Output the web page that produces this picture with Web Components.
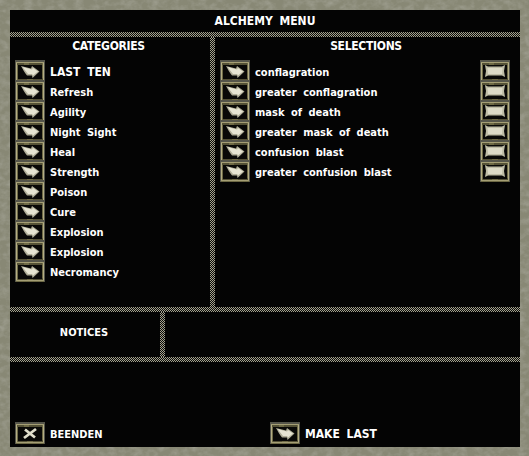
<!DOCTYPE html>
<html>
<head>
<meta charset="utf-8">
<title>Alchemy Menu</title>
<style>
html, body { margin: 0; padding: 0; background: #000; }
</style>
</head>
<body>
<script>
const checker = 'background:repeating-conic-gradient(#a3a18c 0 25%, #0a0a0a 0 50%) 0 0/2px 2px;'

class AmButton extends HTMLElement {
  connectedCallback() {
    const kind = this.getAttribute('icon') || 'arrow'
    const root = this.attachShadow({mode: 'open'})
    root.innerHTML = `<style>
      :host { display: block; width: 30px; height: 22px; flex: none; }
      svg { display: block; width: 30px; height: 22px; }
      .face { filter: blur(.35px); }
    </style>
    ${this.svg(kind)}`
  }
  svg(kind) {
    // arrow is the default face, the others swap it out
    let inner = '<path d="M6 6 L16 8.500 L17 6 L24.500 11.500 L17.500 18 L17 15.500 L12 15.500 C9.500 12.500 8 9.500 6 6Z" fill="#b0ae98"/><path d="M7.500 7 L17 9.500 L18 8 L23 11.500 L18 15.500 L17 14 L13 14Z" fill="#e6e4d2"/>'
    if (kind == 'blank') inner = '<path d="M5 5 L8 6.500 L22 6.500 L25 5 L24 11 L25 17 L22 15.500 L8 15.500 L5 17 L6 11Z" fill="#bfbda6"/><path d="M7.500 8 L22.500 8 L22 14 L8 14Z" fill="#dcdac6"/>'
    if (kind == 'cross') inner = '<path d="M10 7.500 L20 15.500 M21 7 L9 16" stroke="#e2e0cc" stroke-width="2.800" fill="none"/>'
    return `<svg viewBox="0 0 30 22">
      <rect width="30" height="22" fill="#55554a"/>
      <rect x="1" y="2" width="28" height="20" fill="#6e6a46"/>
      <path d="M1 2H29V3H1ZM1 20H29V21H1Z" fill="#a49e74"/>
      <path d="M1.500 3V20M28.500 3V20" stroke="#b4ae84" stroke-width="1"/>
      <path d="M2 4H9M14 4H27M3 19H12M18 19H28" stroke="#3a3826" stroke-width="1"/>
      <rect x="3" y="5" width="24" height="14" fill="#090907"/>
      <g class="face">${inner}</g>
    </svg>`
  }
}
customElements.define('am-button', AmButton)

class AmRow extends HTMLElement {
  connectedCallback() {
    const root = this.attachShadow({mode: 'open'})
    const end = this.getAttribute('end')
    root.innerHTML = `<style>
      :host { display: flex; align-items: flex-start; height: 20px; gap: 5px; font-size: 11px; }
      :host([caps]) { font-size: 12px; }
      .label { flex: 1; white-space: nowrap; line-height: 25px; }
    </style>
    <am-button icon="${this.getAttribute('icon') || 'arrow'}"></am-button>
    <span class="label"><slot></slot></span>
    ${end ? `<am-button icon="${end}"></am-button>` : ''}`
  }
}
customElements.define('am-row', AmRow)

class AmPanel extends HTMLElement {
  connectedCallback() {
    const root = this.attachShadow({mode: 'open'})
    root.innerHTML = `<style>
      :host { display: block; min-width: 0; }
      h2 { margin: 0; height: 23px; padding-right: 3px; font: inherit; letter-spacing: -.3px; text-align: center; line-height: 19px; }
      .rows { padding: 0 10px 0 5px; }
    </style>
    <h2>${this.getAttribute('heading')}</h2>
    <div class="rows"><slot></slot></div>`
  }
}
customElements.define('am-panel', AmPanel)

class AmWindow extends HTMLElement {
  connectedCallback() {
    const root = this.attachShadow({mode: 'open'})
    root.innerHTML = `<style>
      :host {
        display: block; position: relative; width: 529px; height: 456px; box-sizing: border-box;
        padding: 10px 9px 9px 10px;
        background: #84846f;
        color: #fff;
        font: bold 12px "DejaVu Sans Condensed", "DejaVu Sans", sans-serif;
        word-spacing: 3px;
      }
      .stone { position: absolute; left: 0; top: 0; }
      .inner { position: relative; display: grid; height: 100%; background: #040404;
        grid-template-rows: 22px 5px 270px 5px 45px 5px 1fr; }
      .title { text-align: center; line-height: 23px; }
      .hr { ${checker} }
      .main { display: grid; grid-template-columns: 200px 5px 1fr; }
      .vr { ${checker} }
      .notices { display: grid; grid-template-columns: 150px 5px 1fr; }
      .notices span { padding-right: 2px; font-size: 11px; text-align: center; line-height: 41px; }
      .bottom { display: grid; grid-template-columns: 255px 1fr; align-items: end; padding: 0 5px 5px; }
    </style>
    <svg class="stone" width="529" height="456">
      <filter id="grain" x="0" y="0" width="100%" height="100%">
        <feTurbulence type="fractalNoise" baseFrequency="0.12 0.16" numOctaves="3" seed="4"/>
        <feColorMatrix values="0 0 0 0 0.4  0 0 0 0 0.4  0 0 0 0 0.34  1.6 0 0 0 -0.6"/>
      </filter>
      <rect width="529" height="456" fill="#888875"/>
      <rect width="529" height="456" filter="url(#grain)" opacity=".75"/>
    </svg>
    <div class="inner">
      <div class="title">ALCHEMY MENU</div>
      <div class="hr"></div>
      <div class="main">
        <slot name="left"></slot>
        <div class="vr"></div>
        <slot name="right"></slot>
      </div>
      <div class="hr"></div>
      <div class="notices"><span>NOTICES</span><div class="vr"></div><div></div></div>
      <div class="hr"></div>
      <div class="bottom"><slot name="bottom"></slot></div>
    </div>`
  }
}
customElements.define('am-window', AmWindow)
</script>
<am-window>
  <am-panel slot="left" heading="CATEGORIES">
    <am-row caps>LAST TEN</am-row><am-row>Refresh</am-row><am-row>Agility</am-row><am-row>Night Sight</am-row>
    <am-row>Heal</am-row><am-row>Strength</am-row><am-row>Poison</am-row><am-row>Cure</am-row>
    <am-row>Explosion</am-row><am-row>Explosion</am-row><am-row>Necromancy</am-row>
  </am-panel>
  <am-panel slot="right" heading="SELECTIONS">
    <am-row end="blank">conflagration</am-row><am-row end="blank">greater conflagration</am-row>
    <am-row end="blank">mask of death</am-row><am-row end="blank">greater mask of death</am-row>
    <am-row end="blank">confusion blast</am-row><am-row end="blank">greater confusion blast</am-row>
  </am-panel>
  <am-row slot="bottom" icon="cross">BEENDEN</am-row>
  <am-row slot="bottom" caps>MAKE LAST</am-row>
</am-window>
</body>
</html>
